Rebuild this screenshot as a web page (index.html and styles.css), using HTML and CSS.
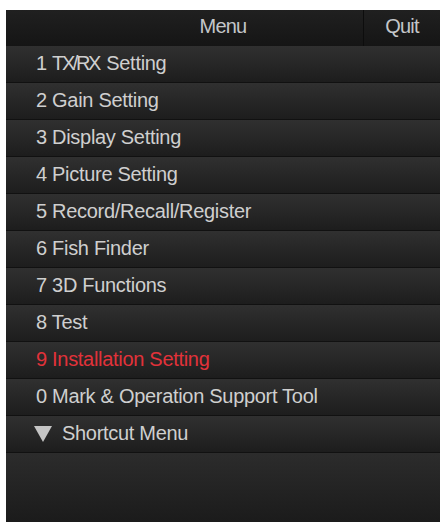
FILE: index.html
```html
<!DOCTYPE html>
<html>
<head>
<meta charset="utf-8">
<link rel="stylesheet" href="styles.css">
</head>
<body>
<div class="panel">
  <div class="header">
    <div class="title">Menu</div>
    <div class="quit">Quit</div>
  </div>
  <div class="row">1 <span class="tight">TX/RX</span> Setting</div>
  <div class="row">2 Gain Setting</div>
  <div class="row">3 Display Setting</div>
  <div class="row">4 Picture Setting</div>
  <div class="row">5 Record/Recall/Register</div>
  <div class="row">6 Fish Finder</div>
  <div class="row">7 3D Functions</div>
  <div class="row">8 Test</div>
  <div class="row active">9 Installation Setting</div>
  <div class="row">0 Mark &amp; Operation Support Tool</div>
  <div class="row shortcut"><span class="tri"></span>Shortcut Menu</div>
  <div class="empty"></div>
</div>
</body>
</html>
```
FILE: styles.css
```css
html, body {
  margin: 0;
  background: #ffffff;
}
body {
  padding: 10px 7px 7px 6px;
  font-family: "Liberation Sans", Arial, sans-serif;
}
.panel {
  width: 434px;
  height: 512px;
  display: flex;
  flex-direction: column;
  background: #1c1c1c;
}
.header {
  height: 36px;
  display: flex;
  background: linear-gradient(#202020, #151515);
  color: #c4c6c9;
  font-size: 20px;
  letter-spacing: -0.8px;
}
.title {
  flex: 1;
  padding-left: 77px;
  padding-bottom: 3px;
  display: flex;
  align-items: center;
  justify-content: center;
}
.quit {
  width: 76px;
  border-left: 1px solid #0d0d0d;
  padding-bottom: 3px;
  display: flex;
  align-items: center;
  justify-content: center;
}
.row {
  height: 37px;
  box-sizing: border-box;
  border-bottom: 1px solid #111111;
  background: linear-gradient(#303030, #1d1d1d);
  color: #cfcfcf;
  font-size: 20px;
  letter-spacing: -0.3px;
  display: flex;
  align-items: center;
  padding-left: 30px;
  padding-bottom: 2px;
  white-space: pre;
}
.tight {
  letter-spacing: -2.4px;
  margin-right: 2px;
}
.row.active {
  color: #e2323a;
}
.row.shortcut {
  padding-left: 28px;
}
.tri {
  width: 0;
  height: 0;
  border-left: 9px solid transparent;
  border-right: 9px solid transparent;
  border-top: 16px solid #c4c4c4;
  margin-right: 10px;
  margin-top: 2px;
}
.empty {
  flex: 1;
  background: linear-gradient(#2c2c2c, #1b1b1b);
}
```
